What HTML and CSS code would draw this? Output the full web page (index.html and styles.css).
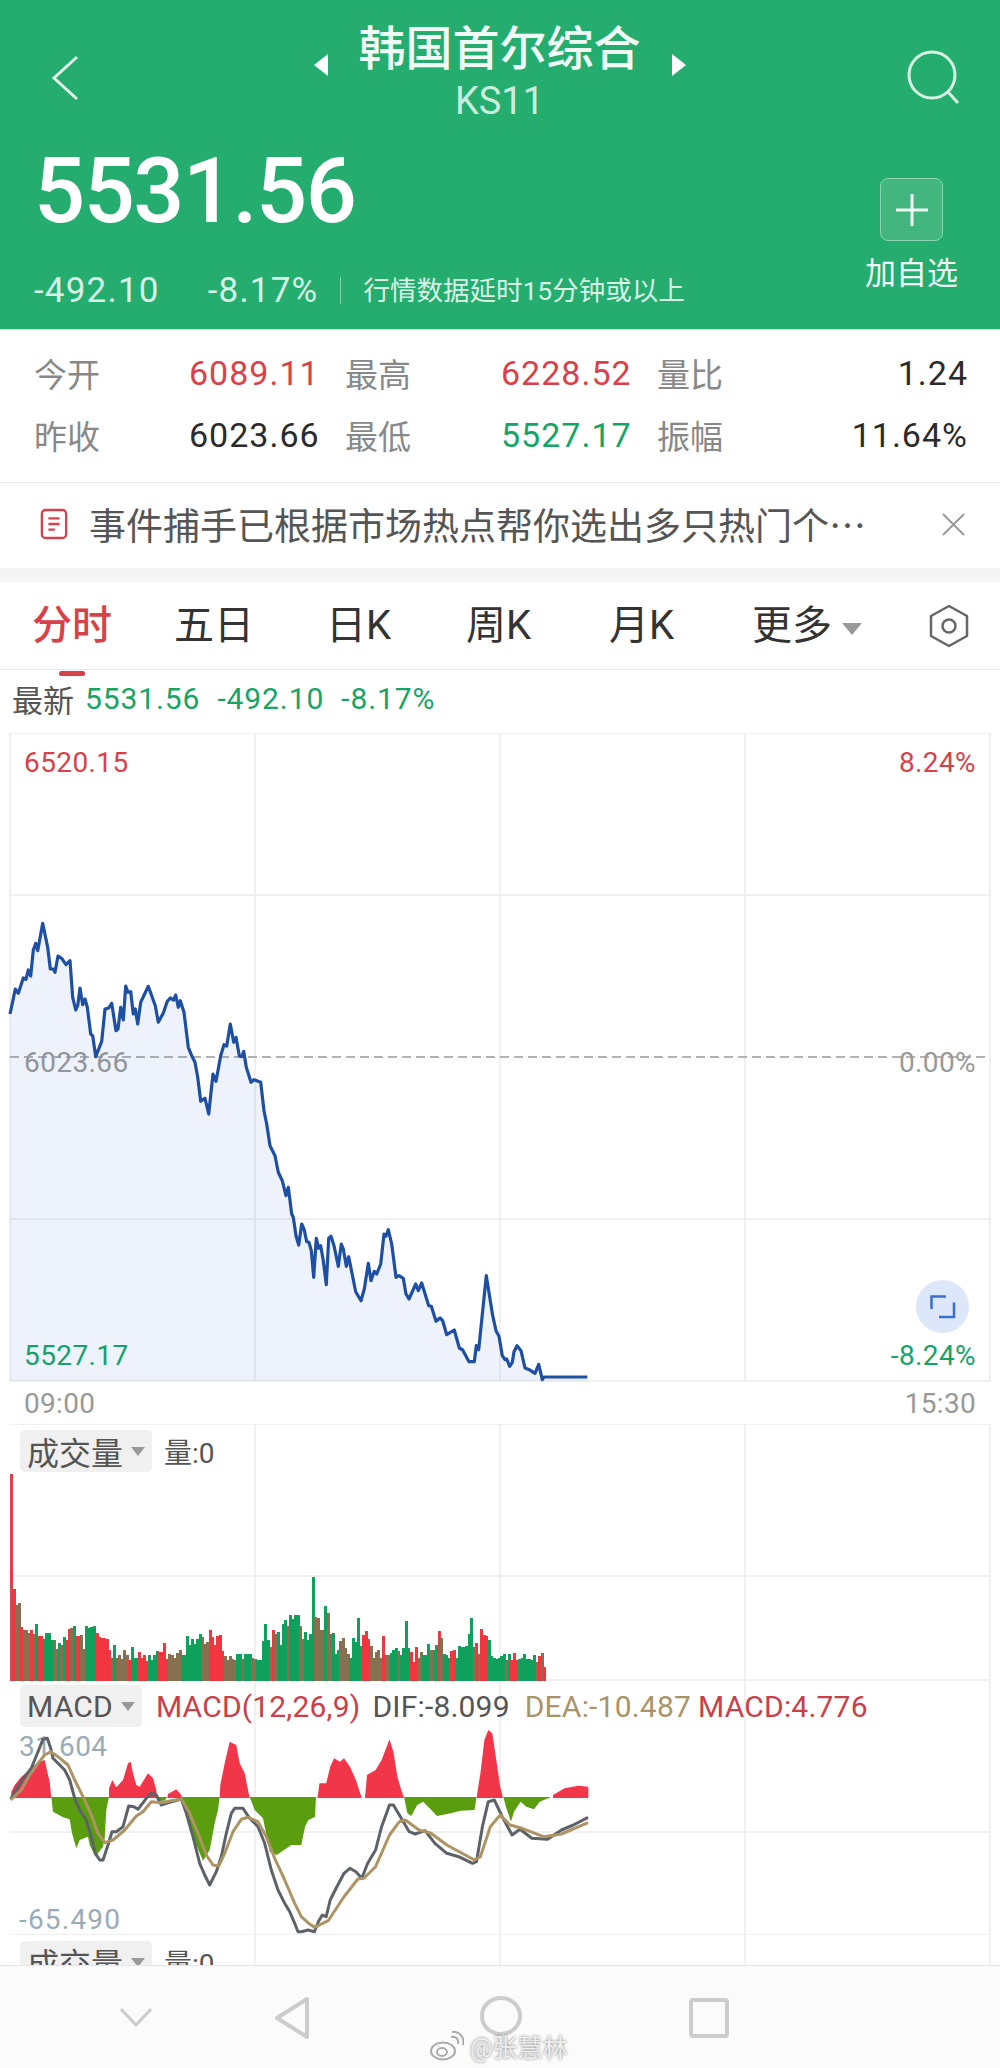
FILE: index.html
```html
<!DOCTYPE html>
<html>
  <head>
    <title>韩国首尔综合</title>
    <meta http-equiv="Content-Type" content="text/html; charset=UTF-8"/>
    <link rel="stylesheet" href="styles.css">
  </head>
  <body>
    <header class="hero">
      <div class="hero-top">
        <svg class="icon-back" viewBox="0 0 28 46"><polyline points="26,2 3,23 26,44"/></svg>
        <div class="title-block">
          <div class="title-row">
            <span class="tri tri-left"></span>
            <span class="title">韩国首尔综合</span>
            <span class="tri tri-right"></span>
          </div>
          <div class="code">KS11</div>
        </div>
        <svg class="icon-search" viewBox="0 0 54 54"><circle cx="25" cy="25" r="23"/><line x1="41" y1="42" x2="51" y2="53"/></svg>
      </div>
      <div class="hero-main">
        <div>
          <div class="price">5531.56</div>
          <div class="change">
            <span class="change-abs">-492.10</span>
            <span class="change-pct">-8.17%</span>
            <span class="delay">行情数据延时15分钟或以上</span>
          </div>
        </div>
        <div class="watch">
          <div class="watch-btn">
            <svg viewBox="0 0 32 32"><path d="M16 0V32M0 16H32"/></svg>
          </div>
          <div class="watch-label">加自选</div>
        </div>
      </div>
    </header>

    <section class="stats">
      <span class="stat-label">今开</span><span class="stat-num up">6089.11</span>
      <span class="stat-label">最高</span><span class="stat-num up">6228.52</span>
      <span class="stat-label">量比</span><span class="stat-num last">1.24</span>
      <span class="stat-label">昨收</span><span class="stat-num">6023.66</span>
      <span class="stat-label">最低</span><span class="stat-num down">5527.17</span>
      <span class="stat-label">振幅</span><span class="stat-num last">11.64%</span>
    </section>

    <section class="notice">
      <svg class="icon-doc" viewBox="0 0 30 34">
        <rect x="2" y="2" width="26" height="30" rx="4"/>
        <path d="M9 11H21M9 17H21M9 23H16"/>
      </svg>
      <span class="notice-text">事件捕手已根据市场热点帮你选出多只热门个…</span>
      <svg class="icon-close" viewBox="0 0 24 24"><path d="M1 1L23 23M23 1L1 23"/></svg>
    </section>
    <div class="band"></div>

    <nav class="tabs">
      <span class="tab active">分时</span>
      <span class="tab">五日</span>
      <span class="tab">日K</span>
      <span class="tab">周K</span>
      <span class="tab">月K</span>
      <span class="tab">更多<i class="caret"></i></span>
      <svg class="icon-hex" viewBox="0 0 40 44">
        <path d="M20 2L38 12V32L20 42L2 32V12Z"/>
        <circle cx="20" cy="22" r="6.5"/>
      </svg>
    </nav>

    <div class="latest">
      <span class="latest-label">最新</span>
      <span>5531.56</span>
      <span>-492.10</span>
      <span>-8.17%</span>
    </div>

    <section class="panel panel-price">
      <span class="y-label tl up">6520.15</span>
      <span class="y-label tr up">8.24%</span>
      <span class="y-label ml muted">6023.66</span>
      <span class="y-label mr muted">0.00%</span>
      <span class="y-label bl down">5527.17</span>
      <span class="y-label br down">-8.24%</span>
      <svg id="price-chart" class="chart" viewBox="0 734 1000 649">
        <path class="grid" d="M10 734H990M10 896H990M10 1220H990M10 1382H990M10 734V1382M255 734V1382M500 734V1382M745 734V1382M990 734V1382"/>
        <path class="zero" d="M10 1058H990"/>
      </svg>
      <div class="expand">
        <svg viewBox="0 0 53 53"><path d="M15.500 29V16.500H30M23 37H38V22.500"/></svg>
      </div>
    </section>

    <div class="times"><span>09:00</span><span>15:30</span></div>

    <section class="panel panel-volume">
      <svg id="volume-chart" class="chart" viewBox="0 1424 1000 257">
        <path class="grid" d="M10 1424H990M10 1576H990M10 1680H990M255 1424V1680M500 1424V1680M745 1424V1680M990 1424V1680"/>
      </svg>
      <div class="legend">
        <span class="tag">成交量<i class="caret small"></i></span>
        <span class="legend-vol">量:0</span>
      </div>
    </section>

    <section class="panel panel-macd">
      <span class="y-label macd-top">31.604</span>
      <span class="y-label macd-bottom">-65.490</span>
      <svg id="macd-chart" class="chart" viewBox="0 1681 1000 254">
        <path class="grid" d="M10 1832H990M10 1935H990M255 1681V1935M500 1681V1935M745 1681V1935M990 1681V1935"/>
      </svg>
      <div class="legend legend-macd">
        <span class="tag tag-macd">MACD<i class="caret small"></i></span>
        <span class="up-dark">MACD(12,26,9)</span>
        <span class="dif">DIF:-8.099</span>
        <span class="dea">DEA:-10.487</span>
        <span class="up-dark">MACD:4.776</span>
      </div>
    </section>

    <section class="panel panel-next">
      <svg class="chart" viewBox="0 1935 1000 30">
        <path class="grid" d="M255 1935V1965M500 1935V1965M745 1935V1965M990 1935V1965"/>
      </svg>
      <div class="legend">
        <span class="tag">成交量<i class="caret small"></i></span>
        <span class="legend-vol">量:0</span>
      </div>
    </section>

    <footer class="sysnav">
      <svg class="nav-down" viewBox="0 0 32 19"><polyline points="1,1 16,17 31,1"/></svg>
      <svg class="nav-back" viewBox="0 0 36 44"><path d="M33 3V41L3 22Z"/></svg>
      <svg class="nav-home" viewBox="0 0 42 40"><ellipse cx="21" cy="20" rx="19" ry="18"/></svg>
      <svg class="nav-recent" viewBox="0 0 40 40"><rect x="2" y="2" width="36" height="36" rx="2"/></svg>
      <div class="watermark">
        <svg viewBox="0 0 34 30">
          <ellipse cx="13" cy="20" rx="12" ry="8.500"/>
          <ellipse cx="12" cy="21" rx="5" ry="4"/>
          <path d="M21 6C26 5 29 8 28 13M22 1C29 0 35 6 33 14"/>
        </svg>
        <span>@张慧林</span>
      </div>
    </footer>

    <script src="chart.js"></script>
  </body>
</html>
```

FILE: styles.css
```css
* {
  box-sizing: border-box;
}

body {
  margin: 0;
  width: 1000px;
  height: 2068px;
  overflow: hidden;
  background: #fff;
  color: #333;
  font-family: Roboto, 'Noto Sans CJK SC', sans-serif;
}

i {
  font-style: normal;
}

svg {
  display: block;
  fill: none;
}

.up { color: #d9414a; }
.down { color: #14a566; }
.muted { color: #999; }

/* header */
.hero {
  height: 330px;
  padding-top: 21px;
  background: #24ad6f;
  border-bottom: 1px solid #b9e6d2;
  color: #fff;
}

.hero-top {
  display: flex;
  justify-content: space-between;
  align-items: flex-start;
  height: 105px;
  padding: 0 39px 0 51px;
}

.icon-back {
  width: 28px;
  height: 46px;
  margin-top: 34px;
  stroke: #e2f6ec;
  stroke-width: 3;
}

.icon-search {
  width: 54px;
  height: 54px;
  margin-top: 29px;
  stroke: #d8f3e6;
  stroke-width: 3;
}

.title-block {
  display: flex;
  flex-direction: column;
  align-items: center;
  margin-left: 13px;
}

.title-row {
  display: flex;
  align-items: flex-end;
  gap: 31px;
  height: 55px;
}

.title {
  font-size: 47px;
  line-height: 55px;
  font-weight: 500;
  color: #f0fbf6;
}

.tri {
  width: 0;
  height: 0;
  border-top: 11px solid transparent;
  border-bottom: 11px solid transparent;
}

.tri-left { border-right: 14px solid #fff; }
.tri-right { border-left: 14px solid #fff; }

.code {
  font-size: 38px;
  line-height: 50px;
  color: #c9eedd;
}

.hero-main {
  display: flex;
  justify-content: space-between;
  padding: 0 42px 0 34px;
}

.price {
  margin-top: 21px;
  font-size: 90px;
  line-height: 90px;
  font-weight: 500;
  letter-spacing: -1.500px;
  color: #fff;
}

.change {
  display: flex;
  align-items: center;
  height: 40px;
  margin-top: 33px;
  font-size: 35px;
  letter-spacing: 1.200px;
  color: #d8f3e6;
}

.change-pct {
  margin-left: 48px;
}

.delay {
  margin-left: 22px;
  padding-left: 22px;
  border-left: 1px solid #7fd0aa;
  font-size: 26.500px;
  line-height: 27px;
  letter-spacing: 0;
}

.watch {
  display: flex;
  flex-direction: column;
  align-items: center;
  margin-top: 52px;
}

.watch-btn {
  display: flex;
  align-items: center;
  justify-content: center;
  width: 63px;
  height: 63px;
  border: 1.500px solid #8ad4b1;
  border-radius: 8px;
  background: #43b57f;
}

.watch-btn svg {
  width: 32px;
  height: 32px;
  stroke: #ecf9f3;
  stroke-width: 3;
}

.watch-label {
  margin-top: 13px;
  font-size: 31px;
  line-height: 40px;
  color: #f0fbf6;
}

/* quote stats */
.stats {
  display: grid;
  grid-template-columns: 155px 156px 156px 156px 100px 1fr;
  grid-auto-rows: 62px;
  align-items: center;
  height: 153px;
  padding: 12px 32px 0 34px;
  border-bottom: 1.500px solid #e8e8e8;
}

.stat-label {
  font-size: 33px;
  color: #888;
}

.stat-num {
  font-size: 34px;
  letter-spacing: 1px;
  color: #2b2b2b;
}

.stat-num.up { color: #d9414a; }
.stat-num.down { color: #14a566; }
.stat-num.last { text-align: right; }

/* notice */
.notice {
  display: flex;
  align-items: center;
  height: 85px;
  padding: 0 35px 3px 40px;
}

.icon-doc {
  width: 28px;
  height: 32px;
  stroke: #d9414a;
  stroke-width: 2.500;
}

.notice-text {
  margin-left: 21px;
  font-family: 'Noto Sans CJK SC', sans-serif;
  font-size: 37px;
  color: #555;
  white-space: nowrap;
}

.icon-close {
  width: 23px;
  height: 23px;
  margin-left: auto;
  stroke: #999;
  stroke-width: 2;
}

.band {
  height: 14px;
  background: #f5f5f5;
}

/* period tabs */
.tabs {
  display: grid;
  grid-template-columns: 142px 152px 140px 143px 143px 179px auto;
  align-items: center;
  height: 88px;
  padding: 0 31px 0 32px;
  border-bottom: 1.500px solid #e8e8e8;
  font-size: 40px;
  color: #333;
}

.tab {
  position: relative;
  line-height: 50px;
}

.tab.active {
  font-weight: 500;
  color: #d9414a;
}

.tab.active::after {
  content: "";
  position: absolute;
  left: 27px;
  bottom: -25px;
  width: 26px;
  height: 5px;
  border-radius: 2px;
  background: #d9414a;
}

.caret {
  display: inline-block;
  width: 0;
  height: 0;
  margin-left: 10px;
  vertical-align: 4px;
  border-left: 10px solid transparent;
  border-right: 10px solid transparent;
  border-top: 12px solid #999;
}

.caret.small {
  margin-left: 8px;
  vertical-align: 5px;
  border-left-width: 7px;
  border-right-width: 7px;
  border-top-width: 9px;
}

.icon-hex {
  width: 40px;
  height: 44px;
  margin-left: -2px;
  stroke: #666;
  stroke-width: 2.500;
  stroke-linejoin: round;
}

/* latest row */
.latest {
  display: flex;
  align-items: center;
  gap: 17px;
  height: 63px;
  padding: 0 0 7px 12px;
  font-size: 30px;
  letter-spacing: 0.900px;
  color: #14a566;
}

.latest-label {
  margin-right: -6px;
  font-size: 31px;
  letter-spacing: 0;
  color: #555;
}

/* chart panels */
.panel {
  position: relative;
}

.chart {
  position: absolute;
  left: 0;
  top: 0;
  width: 100%;
  height: 100%;
  z-index: 2;
}

.chart .grid {
  stroke: #ececec;
  stroke-width: 1.500;
}

.chart .zero {
  stroke: #999;
  stroke-width: 1.500;
  stroke-dasharray: 9 5;
}

.panel-price { height: 649px; }
.panel-volume { height: 257px; }
.panel-macd { height: 254px; }
.panel-next { height: 30px; overflow: hidden; }

.y-label {
  position: absolute;
  z-index: 1;
  font-size: 28px;
  line-height: 28px;
  letter-spacing: 0.400px;
}

.tl { left: 24px; top: 16px; }
.tr { right: 24px; top: 16px; }
.ml { left: 24px; top: 316px; }
.mr { right: 24px; top: 316px; }
.bl { left: 24px; top: 609px; }
.br { right: 24px; top: 609px; }

.macd-top { left: 19px; top: 52px; color: #9aabb8; }
.macd-bottom { left: 19px; top: 225px; color: #9aabb8; letter-spacing: 1.200px; }

.expand {
  position: absolute;
  z-index: 3;
  left: 916px;
  top: 547px;
  width: 53px;
  height: 53px;
  border-radius: 50%;
  background: #dce7fa;
}

.expand svg {
  width: 53px;
  height: 53px;
  stroke: #3a6fd0;
  stroke-width: 2.500;
}

.times {
  display: flex;
  justify-content: space-between;
  align-items: center;
  height: 42px;
  padding: 0 24px;
  font-size: 28px;
  letter-spacing: 0.300px;
  color: #999;
}

.legend {
  position: relative;
  z-index: 3;
  display: flex;
  align-items: center;
  gap: 12px;
  padding: 6px 0 0 20px;
  font-size: 28px;
}

.tag {
  display: inline-flex;
  align-items: center;
  height: 42px;
  padding: 0 7px;
  border-radius: 5px;
  background: #f0f0f0;
  font-size: 32px;
  color: #555;
}

.legend-vol {
  font-size: 28px;
  color: #555;
}

.legend-macd {
  padding-top: 4px;
  gap: 0;
  font-size: 30px;
  letter-spacing: 0.200px;
}

.tag-macd {
  margin-right: 14px;
  font-size: 30px;
}

.up-dark { color: #c9404a; }
.dif { margin: 0 15px 0 12px; color: #555; }
.dea { margin-right: 7px; color: #a89468; }

/* system nav */
.sysnav {
  position: relative;
  display: flex;
  align-items: flex-start;
  height: 103px;
  padding: 30px 0 0 120px;
  border-top: 1.500px solid #e5e5e5;
  background: #fbfbfb;
  stroke: #ccc;
}

.nav-down {
  width: 32px;
  height: 19px;
  margin-top: 12px;
  stroke: #ccc;
  stroke-width: 3;
}

.nav-back {
  width: 36px;
  height: 44px;
  margin-left: 122px;
  stroke: #ccc;
  stroke-width: 4;
  stroke-linejoin: round;
}

.nav-home {
  width: 42px;
  height: 40px;
  margin-left: 170px;
  stroke: #ccc;
  stroke-width: 4;
}

.nav-recent {
  width: 40px;
  height: 40px;
  margin: 2px 0 0 167px;
  stroke: #ccc;
  stroke-width: 4;
}

.watermark {
  position: absolute;
  left: 430px;
  top: 62px;
  display: flex;
  align-items: center;
  gap: 6px;
  font-size: 25px;
  color: #eee;
  text-shadow: 0 0 3px #777;
}

.watermark svg {
  width: 34px;
  height: 30px;
  stroke: #aaa;
  stroke-width: 2;
  fill: none;
}
```

FILE: chart.js
```js
var NS = 'http://www.w3.org/2000/svg'

function add(svg, tag, attrs) {
  var el = document.createElementNS(NS, tag)
  for (var k in attrs) el.setAttribute(k, attrs[k])
  svg.appendChild(el)
}

// all chart points are in page pixels, the svg viewBoxes match the page
var priceLine = '10,1015 12.7,1002.3 15.3,990 18.3,994.3 23.3,979 26,980.3 28.3,971 30.7,977 33.3,951 35.7,944.3 37.7,951.7 42.7,924.3 47.7,948.3 50.3,970 53.3,970 55,973.3 58,957 61.7,959.3 66,965.7 70,961.7 72.7,998.3 75.7,1011 77.7,1006.7 80,989 82.7,1005.7 85,1000 87.3,1008.3 90.7,1035 92.7,1036.7 95.7,1057.7 101.7,1042.3 105,1010 108.7,1009 111.7,1004.3 116,1031.7 118,1030 120.7,1008.3 123.3,1021 125.7,987 128,993.3 130.7,992.7 133.3,1015 135.3,1010 137.7,1025 140.7,1003.3 148.3,987.3 155.3,1006.7 158.3,1023.3 163.3,1014 167.3,1002.3 170.3,999 173.7,1001 175.7,996 178.3,1008.3 180.3,1001.7 184,1013.3 188.3,1048.3 191.7,1056.7 195,1063.3 197.7,1078.3 200.7,1102.3 205,1099.3 208.7,1115 213,1075 216,1082.3 220.7,1056.7 224,1045.7 226.7,1047 230.3,1025 233.7,1043.3 236,1038.3 239.3,1056.7 241.7,1057.7 243.7,1052.3 246.3,1068.3 251,1083.3 254,1080.7 260.7,1083.3 264,1111.7 266.7,1125 270,1146.7 275,1156.7 278.3,1173.3 282.3,1181.7 286,1196.7 288.3,1188.3 291.7,1215 293.3,1218.3 296,1236.7 298.7,1246 301.7,1225 304.3,1231 306.7,1242.7 309,1243.3 311.3,1251.7 313.7,1278.3 316.3,1239.3 318.7,1249.3 320.7,1246.7 323.3,1261.7 326.3,1285.7 328.7,1239.3 331,1237.3 334,1246.7 338.3,1267.3 341.3,1245 343.3,1250 346.3,1267.3 348.7,1257.7 355.7,1292.7 361,1301.7 364.3,1290 368.3,1264.3 371,1281.7 374.3,1272.3 376.7,1275 380.7,1265 384,1235 386,1237.3 388.3,1230.7 391.7,1245 396,1278.3 399,1276.7 403.3,1279.3 406,1295 409,1300 415.7,1285 418.3,1291.7 421.7,1284 428.7,1306.7 431.3,1307.3 436,1322.3 440,1319 442.7,1321.7 446.7,1335.7 454.3,1331 459.3,1349 462.7,1351 469,1362.7 474.3,1362.7 476.3,1346.7 478.7,1350.7 486.3,1276.7 492.7,1316.7 496,1331.7 499,1337.3 502.3,1356.7 505,1360.7 506.7,1360 509.7,1367.3 512.3,1363.3 514,1352.7 517,1346.7 521,1351.7 525,1369 529.3,1370.7 535,1374.3 538.7,1365.3 542.3,1380.7 544,1378 587.3,1378'

var price = document.getElementById('price-chart')
add(price, 'polygon', { points: priceLine + ' 587.3,1382 10,1382', fill: 'rgba(43,100,200,0.08)' })
add(price, 'polyline', { points: priceLine, fill: 'none', stroke: '#1f4fa3', 'stroke-width': 3.2, 'stroke-linejoin': 'round' })

// r red, g green, b red and green bars overlapping
var bars = 'r207 r92 b76 b78 r54 b51 b51 b48 r51 b47 g57 r45 r45 g42 g48 g48 g41 b41 b32 g38 b36 g44 r41 r52 b53 g55 r45 r45 b46 b32 g55 g53 g54 g55 r48 r44 r43 r43 r42 r31 b23 g36 b23 b26 b22 b31 b26 r21 g34 g23 g23 r29 r23 r26 r20 g26 g21 g26 g30 r29 r29 r38 r22 b27 b26 b23 b28 b31 g26 g26 g45 g36 g42 g37 g42 g47 b44 b37 b39 r51 r44 r36 r45 r46 r30 b25 b21 b25 b22 b21 g27 g27 b22 g27 g27 g27 b23 b22 g21 g21 g40 g57 g41 b34 r51 b47 g49 g36 g57 g61 ' +
  'b55 g66 g62 g66 g66 b55 b42 g49 g41 g47 g104 b64 b63 b51 b51 g75 b68 b47 g48 g27 g31 b40 b43 b33 b27 g23 g43 g39 g63 g35 r46 r50 r42 b35 b23 b29 b31 b23 r45 b26 b26 g28 g31 g33 b30 g26 g33 g60 g33 r29 r19 r34 b23 b29 g26 g26 g37 b31 g31 g36 r50 b43 g27 g26 g23 r30 r31 g23 g35 g34 g34 g35 g47 g63 b34 r38 b27 r52 r46 r45 g41 g25 g23 g22 g23 g25 g27 b21 g27 r21 r28 r21 g22 g23 g27 g22 g22 g21 g26 b19 r25 b28 r14'
var barColors = { r: '#f2363f', g: '#0fa15c', b: '#86704f' }

var volume = document.getElementById('volume-chart')
bars.split(' ').forEach(function (b, i) {
  var h = +b.slice(1)
  add(volume, 'rect', {
    x: Math.round(10 + i * 2.515),
    y: 1681 - h,
    width: 3,
    height: h,
    fill: i == 0 ? '#d9434d' : barColors[b[0]],
    'shape-rendering': 'crispEdges'
  })
})

var macdRed = [
  '11.3,1798 11.3,1791.7 14.7,1785 21.3,1776.7 28,1771.7 34.7,1765 39.7,1761.7 44.7,1760 47.3,1771.7 49.7,1781.7 51.3,1798',
  '109,1798 109,1788.3 112.3,1780 116.3,1787.3 123,1780 128,1763.3 130.7,1761.7 133,1773.3 136.3,1785 139.7,1786.7 148,1773.3 153,1778.3 156.3,1790 157,1798',
  '167.3,1798 168,1794 176.3,1789.3 181.3,1795 182,1798',
  '219.7,1798 220.3,1785 224.7,1763.3 229.7,1741.7 236.3,1745 239.7,1763.3 244.7,1773.3 248,1790 249.7,1798',
  '317.5,1798 319.5,1783.3 326.2,1783.3 330.2,1766.7 334.1,1758.3 340,1761.7 344,1758.3 350,1766.7 355.9,1780 361.8,1798',
  '365,1798 367,1775 375.6,1770 381.6,1760 389.5,1739.3 393.4,1751.7 397.4,1776.7 401.3,1790 404.1,1798',
  '476.5,1798 480.4,1773.3 484.4,1740 488.3,1730 492.3,1733.3 496.3,1760 500.2,1786.7 503,1798',
  '553,1798 553,1795 564.6,1788.3 578,1785.7 588.3,1786.7 588.3,1798'
]
var macdGreen = [
  '51.3,1797 53,1811.7 63,1817.3 69.7,1819.3 72,1833.3 76.3,1848.3 79.7,1840 88,1836.7 89.7,1845 95.3,1856.7 103,1846.7 104.7,1838.3 106.3,1810 109,1797',
  '157,1797 159.7,1800.7 164.7,1800.7 167.3,1797',
  '182,1797 186.3,1810 189.7,1830 196.3,1845 203,1860.7 209.7,1850 214.7,1823.3 218,1810 219.7,1797',
  '249.7,1797 254.7,1810 263,1818.3 269.7,1851.7 276.7,1855 291.3,1845 301.3,1845 305,1826.7 308.4,1820 315,1817 316,1797',
  '404.1,1797 407.3,1813.3 411.2,1816 417.2,1805 423.1,1801.7 433,1811.7 436.9,1816 450.8,1813.3 460.6,1810.7 474.5,1810 476.5,1797',
  '503.3,1797 506.4,1808.3 511,1821.7 514,1811.7 520.6,1801.7 526.3,1806.7 534,1809.3 539.7,1801.7 551.2,1797'
]
var dif = '10.7,1799 18,1786.7 24.7,1776.7 31.3,1768.3 38,1751.7 43,1739.3 47.3,1738.3 50.7,1748.3 53,1758.3 58,1763.3 64.7,1770 69.7,1780 74.7,1798.3 79.7,1810 86.3,1820 91.3,1836.7 95.3,1853.3 99.7,1860 103,1860 108,1845 112,1831.7 116.3,1831.7 123,1826.7 128.7,1806 134,1806.7 138,1809.3 146.3,1798.3 151.3,1793.3 156.3,1795 161.3,1805 166.3,1803.3 181.3,1799 186.3,1813.3 193,1836.7 199.7,1863.3 204.7,1875 209.7,1885 216.3,1871.7 221.3,1856.7 226.3,1833.3 231.3,1813.3 234.7,1808.3 243,1808.3 249.7,1818.3 258,1826.7 264.7,1843.3 271.3,1870 278,1890 284.7,1903.3 289.7,1911.7 294.7,1923.3 298,1931.7 301.3,1931.7 308,1930 314.4,1931.7 318.3,1921.7 322.3,1915 326.2,1916.7 330.2,1900 336.1,1888.3 344,1873.3 349.9,1868.3 355.9,1871.7 361.8,1878.3 367.7,1863.3 375.6,1850 381.6,1826.7 389.5,1805 393.4,1805 401.3,1818.3 409.2,1831.7 415.2,1834 425.1,1830.7 434.9,1843.3 446.8,1853.3 458.7,1856.7 472.5,1863.3 476.5,1861.7 482.4,1826.7 488.3,1801.7 494.3,1800 502.2,1816.7 512.1,1835 520,1829.3 531.8,1838.3 547.6,1839.3 561.5,1830 573.4,1825 588,1817.3'
var dea = '10.7,1800 21.3,1790 29.7,1775 38,1763.3 44.7,1755 50.7,1751.7 58,1756.7 68,1765 74.7,1780 83,1796.7 91.3,1815 98,1833.3 104.7,1842.7 113,1840 124.7,1830 136.3,1816 143,1811.7 151.3,1801.7 161.3,1802.7 171.3,1800.7 181.3,1799 189.7,1813.3 198,1833.3 206.3,1855 213,1865 218.7,1866 224.7,1853.3 233,1831.7 241.3,1819.3 248,1817.3 258,1821.7 266.3,1836.7 274.7,1858.3 284.7,1880 294.7,1903.3 301.3,1916.7 308,1922.7 314.4,1927.3 328.2,1920.7 344,1896.7 357.9,1879 363.8,1878.3 375.6,1866.7 389.5,1835 399.4,1821.7 405.3,1820 419.1,1830 431,1833.3 446.8,1845 474.5,1860 480.4,1856.7 490.3,1826.7 500.2,1815 510.1,1825 521.9,1828.3 543.7,1836.7 561.5,1834 588,1822.7'

var macd = document.getElementById('macd-chart')
macdRed.forEach(function (p) { add(macd, 'polygon', { points: p, fill: '#f2364a' }) })
macdGreen.forEach(function (p) { add(macd, 'polygon', { points: p, fill: '#5a9e0f' }) })
add(macd, 'polyline', { points: dif, fill: 'none', stroke: '#5d6268', 'stroke-width': 3, 'stroke-linejoin': 'round' })
add(macd, 'polyline', { points: dea, fill: 'none', stroke: '#ad9464', 'stroke-width': 3, 'stroke-linejoin': 'round' })
```
